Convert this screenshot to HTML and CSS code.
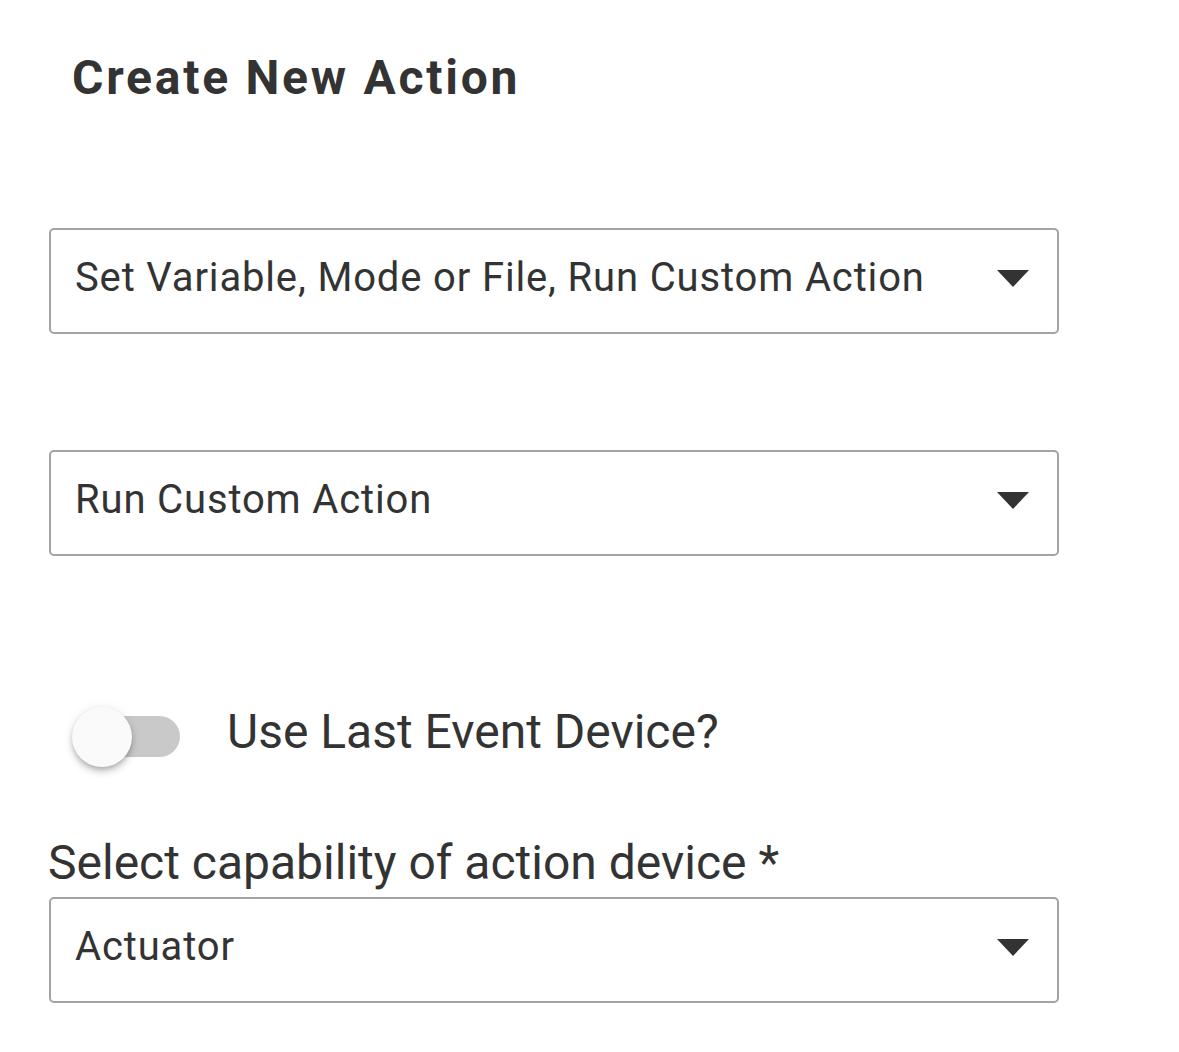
FILE: index.html
```html
<!DOCTYPE html>
<html lang="en">
<head>
<meta charset="utf-8">
<title>Create New Action</title>
<link rel="stylesheet" href="styles.css">
</head>
<body>
<main class="page">
  <h1 class="title">Create New Action</h1>

  <div class="select select-first">
    <span class="select-text">Set Variable, Mode or File, Run Custom Action</span>
    <span class="caret"></span>
  </div>

  <div class="select select-second">
    <span class="select-text">Run Custom Action</span>
    <span class="caret"></span>
  </div>

  <div class="switch-row">
    <span class="switch">
      <span class="switch-track"></span>
      <span class="switch-thumb"></span>
    </span>
    <span class="switch-label">Use Last Event Device?</span>
  </div>

  <div class="field-label">Select capability of action device *</div>
  <div class="select select-third">
    <span class="select-text">Actuator</span>
    <span class="caret"></span>
  </div>
</main>
</body>
</html>
```

FILE: styles.css
```css
html, body {
  margin: 0;
  padding: 0;
  background: #ffffff;
}

body {
  font-family: Roboto, "Noto Sans", "Liberation Sans", sans-serif;
  color: #333333;
}

.page {
  width: 1010px;
  padding: 54px 0 40px 49px;
  display: flex;
  flex-direction: column;
}

.title {
  margin: 0;
  padding-left: 23px;
  font-size: 48px;
  line-height: 48px;
  font-weight: 700;
  letter-spacing: 2.75px;
  color: #333333;
}

.select {
  box-sizing: border-box;
  height: 106px;
  border: 2px solid #a3a3a3;
  border-radius: 5px;
  padding: 28px 28px 34px 24px;
  display: flex;
  align-items: flex-start;
  justify-content: space-between;
}

.select-text {
  font-size: 40px;
  line-height: 40px;
  letter-spacing: 0.85px;
  color: #333333;
  white-space: nowrap;
}

.caret {
  width: 0;
  height: 0;
  margin-top: 12px;
  border-left: 16.5px solid transparent;
  border-right: 16.5px solid transparent;
  border-top: 17px solid #333333;
}

.select-first {
  margin-top: 126px;
}

.select-second {
  margin-top: 116px;
}

.switch-row {
  margin-top: 151px;
  height: 60px;
  display: flex;
  align-items: center;
}

.switch {
  position: relative;
  width: 108px;
  height: 60px;
  margin-left: 23px;
  flex: none;
}

.switch-track {
  position: absolute;
  left: 8px;
  top: 9px;
  width: 100px;
  height: 41px;
  border-radius: 21px;
  background: #c9c9c9;
}

.switch-thumb {
  position: absolute;
  left: 0;
  top: 0;
  width: 60px;
  height: 60px;
  border-radius: 50%;
  background: #fafafa;
  box-shadow: 0 6px 8px -2px rgba(0, 0, 0, 0.22), 0 2px 4px rgba(0, 0, 0, 0.12), 0 1px 12px rgba(0, 0, 0, 0.08);
}

.switch-label {
  margin-left: 47px;
  padding-bottom: 10px;
  font-size: 48px;
  line-height: 48px;
  white-space: nowrap;
}

.field-label {
  margin-top: 72px;
  margin-left: -1px;
  font-size: 48px;
  line-height: 48px;
  white-space: nowrap;
}

.select-third {
  margin-top: 10px;
}
```
